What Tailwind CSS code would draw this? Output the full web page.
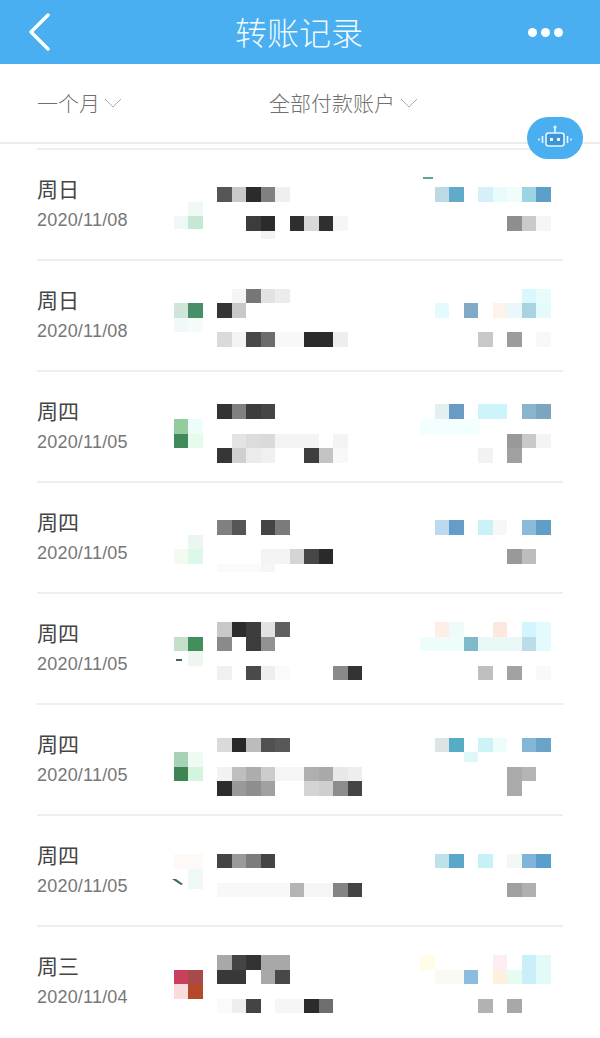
<!DOCTYPE html>
<html lang="zh-CN">
<head>
    <meta charset="UTF-8">
    <meta name="viewport" content="width=device-width, initial-scale=1.0">
    <title>转账记录</title>
    <script src="https://cdn.jsdelivr.net/npm/@tailwindcss/browser@4"></script>
</head>
<body class="bg-white font-['Noto_Sans_CJK_SC','Noto_Sans',sans-serif] w-[600px] h-[1038px] overflow-hidden relative">

    <!-- header -->
    <header class="h-16 bg-[#4aaff0] flex items-center justify-between pl-[27px] pr-[37px] text-white">
        <svg class="w-[25px] h-[38px]" viewBox="0 0 25 38" fill="none" stroke="#fff" stroke-width="3.4" stroke-linecap="round" stroke-linejoin="round"><path d="M21 2 L4 19 L21 36"/></svg>
        <h1 class="text-[32px] font-light leading-none -mt-[3px] pl-[18px] text-white/95">转账记录</h1>
        <div class="flex gap-[4px]">
            <span class="w-[9px] h-[9px] rounded-full bg-white"></span>
            <span class="w-[9px] h-[9px] rounded-full bg-white"></span>
            <span class="w-[9px] h-[9px] rounded-full bg-white"></span>
        </div>
    </header>

    <!-- filters -->
    <div class="h-[80px] border-b-2 border-[#ececec] flex items-center pl-[37px] text-[21px] text-[#707070] font-light">
        <span class="w-[232px] flex items-center">一个月
            <svg class="w-[18px] h-[10px] ml-[4px]" viewBox="0 0 18 10" fill="none" stroke="#aaa" stroke-width="1"><path d="M1 1 L9 9 L17 1"/></svg>
        </span>
        <span class="flex items-center">全部付款账户
            <svg class="w-[18px] h-[10px] ml-[5px]" viewBox="0 0 18 10" fill="none" stroke="#aaa" stroke-width="1"><path d="M1 1 L9 9 L17 1"/></svg>
        </span>
    </div>

    <!-- assistant button -->
    <div class="absolute left-[527px] top-[117px] w-[56px] h-[42px] rounded-[21px] bg-[#4aaff0] flex items-center justify-center">
        <svg class="w-[38px] h-[28px]" viewBox="0 0 38 28" fill="none" stroke="#e8f6fe" stroke-width="1.6">
            <rect x="10" y="9" width="18" height="13" rx="2.5" fill="#3c96d8"/>
            <path d="M19 9 V4"/>
            <circle cx="19" cy="3" r="1.6" fill="#e8f6fe" stroke="none"/>
            <rect x="14" y="14" width="3" height="3" fill="#e8f6fe" stroke="none"/>
            <rect x="21" y="14" width="3" height="3" fill="#e8f6fe" stroke="none"/>
            <path d="M6.500 12 V19 M3 14.500 V16.500 M31.500 12 V19 M35 14.500 V16.500"/>
        </svg>
    </div>

    <main class="pt-[4px]">
        <!-- row 1 -->
        <div class="mx-[37px] h-[111px] border-t-2 border-[#eee] flex">
            <div class="w-[123px] shrink-0 pt-[23px]">
                <p class="text-[21px] leading-[30px] text-[#444]">周日</p>
                <p class="text-[18px] leading-[30px] mt-[2px] tracking-[0.2px] text-[#777] font-['Liberation_Sans']">2020/11/08</p>
            </div>
            <svg class="blur-[0.6px] shrink-0" width="400" height="109" viewBox="160 151 400 109">
                <rect x="188" y="203" width="15" height="14" fill="#f0f8f3"/><rect x="174" y="217" width="14" height="13" fill="#eef9f5"/><rect x="188" y="217" width="15" height="13" fill="#c5e8d5"/>
                <rect x="217" y="188" width="15" height="15" fill="#555"/><rect x="232" y="188" width="14" height="15" fill="#c8c8c8"/><rect x="246" y="188" width="15" height="15" fill="#2b2b2b"/><rect x="261" y="188" width="14" height="15" fill="#808080"/><rect x="275" y="188" width="15" height="15" fill="#efefef"/>
                <rect x="246" y="217" width="15" height="15" fill="#3c3c3c"/><rect x="261" y="217" width="14" height="15" fill="#2b2b2b"/><rect x="290" y="217" width="14" height="15" fill="#2e2e2e"/><rect x="304" y="217" width="15" height="15" fill="#d8d8d8"/><rect x="319" y="217" width="14" height="15" fill="#2f2f2f"/><rect x="333" y="217" width="15" height="15" fill="#f6f6f6"/><rect x="261" y="232" width="14" height="8" fill="#f3f3f3"/>
                <rect x="423" y="178" width="10" height="2" fill="#5aa88c"/>
                <rect x="435" y="188" width="14" height="15" fill="#bcd9e4"/><rect x="449" y="188" width="15" height="15" fill="#5fabc9"/><rect x="478" y="188" width="15" height="15" fill="#d5f0f8"/><rect x="493" y="188" width="14" height="15" fill="#e8fbfb"/><rect x="507" y="188" width="15" height="15" fill="#f0fdf8"/><rect x="522" y="188" width="14" height="15" fill="#9ad5e3"/><rect x="536" y="188" width="15" height="15" fill="#5c9fc9"/>
                <rect x="507" y="217" width="15" height="15" fill="#8e8e8e"/><rect x="522" y="217" width="14" height="15" fill="#cacaca"/><rect x="536" y="217" width="15" height="15" fill="#f6f6f6"/>
            </svg>
        </div>
        <!-- row 2 -->
        <div class="mx-[37px] h-[111px] border-t-2 border-[#eee] flex">
            <div class="w-[123px] shrink-0 pt-[23px]">
                <p class="text-[21px] leading-[30px] text-[#444]">周日</p>
                <p class="text-[18px] leading-[30px] mt-[2px] tracking-[0.2px] text-[#777] font-['Liberation_Sans']">2020/11/08</p>
            </div>
            <svg class="blur-[0.6px] shrink-0" width="400" height="109" viewBox="160 262 400 109">
                <rect x="174" y="304" width="14" height="15" fill="#cfe5d8"/><rect x="188" y="304" width="15" height="15" fill="#468f68"/><rect x="174" y="319" width="14" height="14" fill="#f2f8fa"/><rect x="188" y="319" width="15" height="14" fill="#f5fbf7"/>
                <rect x="232" y="290" width="14" height="14" fill="#f5f5f5"/><rect x="246" y="290" width="15" height="14" fill="#777"/><rect x="261" y="290" width="14" height="14" fill="#e2e2e2"/><rect x="275" y="290" width="15" height="14" fill="#ececec"/>
                <rect x="217" y="304" width="15" height="15" fill="#353535"/><rect x="232" y="304" width="14" height="15" fill="#c8c8c8"/>
                <rect x="217" y="333" width="15" height="15" fill="#dadada"/><rect x="232" y="333" width="14" height="15" fill="#f4f4f4"/><rect x="246" y="333" width="15" height="15" fill="#484848"/><rect x="261" y="333" width="14" height="15" fill="#6c6c6c"/><rect x="275" y="333" width="29" height="15" fill="#f8f8f8"/><rect x="304" y="333" width="29" height="15" fill="#2b2b2b"/><rect x="333" y="333" width="15" height="15" fill="#eee"/>
                <rect x="522" y="290" width="14" height="14" fill="#d8f8fd"/><rect x="536" y="290" width="15" height="14" fill="#e8fbfb"/>
                <rect x="435" y="304" width="14" height="15" fill="#e3fbfd"/><rect x="464" y="304" width="14" height="15" fill="#7fa9c4"/><rect x="493" y="304" width="14" height="15" fill="#fdf3e8"/><rect x="507" y="304" width="15" height="15" fill="#eaf8fb"/><rect x="522" y="304" width="14" height="15" fill="#aad3e2"/><rect x="536" y="304" width="15" height="15" fill="#e3fbfb"/>
                <rect x="478" y="333" width="15" height="15" fill="#c8c8c8"/><rect x="507" y="333" width="15" height="15" fill="#9c9c9c"/><rect x="536" y="333" width="15" height="15" fill="#f8f8f8"/>
            </svg>
        </div>
        <!-- row 3 -->
        <div class="mx-[37px] h-[111px] border-t-2 border-[#eee] flex">
            <div class="w-[123px] shrink-0 pt-[23px]">
                <p class="text-[21px] leading-[30px] text-[#444]">周四</p>
                <p class="text-[18px] leading-[30px] mt-[2px] tracking-[0.2px] text-[#777] font-['Liberation_Sans']">2020/11/05</p>
            </div>
            <svg class="blur-[0.6px] shrink-0" width="400" height="109" viewBox="160 373 400 109">
                <rect x="174" y="420" width="14" height="15" fill="#93cd9c"/><rect x="188" y="420" width="15" height="15" fill="#edfdfb"/><rect x="174" y="435" width="14" height="14" fill="#3f8a58"/><rect x="188" y="435" width="15" height="14" fill="#e5fbec"/>
                <rect x="217" y="405" width="15" height="15" fill="#333"/><rect x="232" y="405" width="14" height="15" fill="#808080"/><rect x="246" y="405" width="15" height="15" fill="#3d3d3d"/><rect x="261" y="405" width="14" height="15" fill="#454545"/>
                <rect x="232" y="435" width="14" height="14" fill="#e4e4e4"/><rect x="246" y="435" width="15" height="14" fill="#dcdcdc"/><rect x="261" y="435" width="14" height="14" fill="#dadada"/><rect x="275" y="435" width="44" height="14" fill="#f4f4f4"/><rect x="333" y="435" width="15" height="14" fill="#f4f4f4"/>
                <rect x="217" y="449" width="15" height="15" fill="#363636"/><rect x="232" y="449" width="14" height="15" fill="#d0d0d0"/><rect x="246" y="449" width="15" height="15" fill="#ebebeb"/><rect x="261" y="449" width="14" height="15" fill="#f0f0f0"/><rect x="304" y="449" width="15" height="15" fill="#3e3e3e"/><rect x="319" y="449" width="14" height="15" fill="#c4c4c4"/><rect x="333" y="449" width="15" height="15" fill="#f8f8f8"/>
                <rect x="420" y="420" width="60" height="15" fill="#f3fefe"/>
                <rect x="435" y="405" width="14" height="15" fill="#e3eff1"/><rect x="449" y="405" width="15" height="15" fill="#6a9bc6"/><rect x="478" y="405" width="29" height="15" fill="#cdf4fb"/><rect x="522" y="405" width="14" height="15" fill="#8ab3cc"/><rect x="536" y="405" width="15" height="15" fill="#7ca5bf"/>
                <rect x="507" y="435" width="15" height="14" fill="#999"/><rect x="522" y="435" width="14" height="14" fill="#c9c9c9"/><rect x="536" y="435" width="15" height="14" fill="#f4f4f4"/><rect x="478" y="449" width="15" height="15" fill="#f2f2f2"/><rect x="507" y="449" width="15" height="15" fill="#a0a0a0"/>
            </svg>
        </div>
        <!-- row 4 -->
        <div class="mx-[37px] h-[111px] border-t-2 border-[#eee] flex">
            <div class="w-[123px] shrink-0 pt-[23px]">
                <p class="text-[21px] leading-[30px] text-[#444]">周四</p>
                <p class="text-[18px] leading-[30px] mt-[2px] tracking-[0.2px] text-[#777] font-['Liberation_Sans']">2020/11/05</p>
            </div>
            <svg class="blur-[0.6px] shrink-0" width="400" height="109" viewBox="160 484 400 109">
                <rect x="188" y="536" width="15" height="14" fill="#ebf6f1"/><rect x="174" y="550" width="14" height="15" fill="#f3faf2"/><rect x="188" y="550" width="15" height="15" fill="#dcf8e8"/>
                <rect x="217" y="521" width="15" height="15" fill="#808080"/><rect x="232" y="521" width="14" height="15" fill="#555"/><rect x="261" y="521" width="14" height="15" fill="#444"/><rect x="275" y="521" width="15" height="15" fill="#7b7b7b"/>
                <rect x="261" y="550" width="29" height="15" fill="#f4f4f4"/><rect x="290" y="550" width="14" height="15" fill="#d5d5d5"/><rect x="304" y="550" width="15" height="15" fill="#474747"/><rect x="319" y="550" width="14" height="15" fill="#2a2a2a"/><rect x="217" y="565" width="44" height="8" fill="#fafafa"/><rect x="261" y="565" width="14" height="8" fill="#f6f6f6"/>
                <rect x="435" y="521" width="14" height="15" fill="#bcd9ee"/><rect x="449" y="521" width="15" height="15" fill="#659dc8"/><rect x="478" y="521" width="15" height="15" fill="#c8f2f8"/><rect x="493" y="521" width="14" height="15" fill="#f7f7f7"/><rect x="522" y="521" width="14" height="15" fill="#8bbbd8"/><rect x="536" y="521" width="15" height="15" fill="#5f9fc5"/>
                <rect x="507" y="550" width="15" height="15" fill="#999"/><rect x="522" y="550" width="14" height="15" fill="#bdbdbd"/>
            </svg>
        </div>
        <!-- row 5 -->
        <div class="mx-[37px] h-[111px] border-t-2 border-[#eee] flex">
            <div class="w-[123px] shrink-0 pt-[23px]">
                <p class="text-[21px] leading-[30px] text-[#444]">周四</p>
                <p class="text-[18px] leading-[30px] mt-[2px] tracking-[0.2px] text-[#777] font-['Liberation_Sans']">2020/11/05</p>
            </div>
            <svg class="blur-[0.6px] shrink-0" width="400" height="109" viewBox="160 595 400 109">
                <rect x="174" y="638" width="14" height="14" fill="#c4e0cc"/><rect x="188" y="638" width="15" height="14" fill="#418f5a"/><rect x="188" y="652" width="15" height="15" fill="#eff6ef"/><rect x="176" y="660" width="6" height="2" fill="#3a6a50"/>
                <rect x="217" y="623" width="15" height="15" fill="#c8c8c8"/><rect x="232" y="623" width="14" height="15" fill="#2c2c2c"/><rect x="246" y="623" width="15" height="15" fill="#3d3d3d"/><rect x="261" y="623" width="14" height="15" fill="#e2e2e2"/><rect x="275" y="623" width="15" height="15" fill="#606060"/>
                <rect x="217" y="638" width="15" height="14" fill="#8a8a8a"/><rect x="246" y="638" width="15" height="14" fill="#3c3c3c"/><rect x="261" y="638" width="14" height="14" fill="#929292"/>
                <rect x="217" y="667" width="15" height="14" fill="#f0f0f0"/><rect x="246" y="667" width="15" height="14" fill="#4a4a4a"/><rect x="261" y="667" width="14" height="14" fill="#eee"/><rect x="275" y="667" width="15" height="14" fill="#fafafa"/><rect x="333" y="667" width="15" height="14" fill="#8a8a8a"/><rect x="348" y="667" width="14" height="14" fill="#333"/>
                <rect x="435" y="623" width="14" height="15" fill="#fdeee8"/><rect x="449" y="623" width="15" height="15" fill="#effbfb"/><rect x="493" y="623" width="14" height="15" fill="#fde8df"/><rect x="522" y="623" width="14" height="15" fill="#d3f5fd"/><rect x="536" y="623" width="15" height="15" fill="#e3fbfd"/>
                <rect x="420" y="638" width="44" height="14" fill="#eefcfc"/><rect x="464" y="638" width="14" height="14" fill="#80b9c9"/><rect x="478" y="638" width="44" height="14" fill="#eaf8f8"/><rect x="522" y="638" width="14" height="14" fill="#bcdcea"/><rect x="536" y="638" width="15" height="14" fill="#e3fbfd"/>
                <rect x="478" y="667" width="15" height="14" fill="#bfbfbf"/><rect x="507" y="667" width="15" height="14" fill="#a2a2a2"/><rect x="536" y="667" width="15" height="14" fill="#f9f9f9"/>
            </svg>
        </div>
        <!-- row 6 -->
        <div class="mx-[37px] h-[111px] border-t-2 border-[#eee] flex">
            <div class="w-[123px] shrink-0 pt-[23px]">
                <p class="text-[21px] leading-[30px] text-[#444]">周四</p>
                <p class="text-[18px] leading-[30px] mt-[2px] tracking-[0.2px] text-[#777] font-['Liberation_Sans']">2020/11/05</p>
            </div>
            <svg class="blur-[0.6px] shrink-0" width="400" height="109" viewBox="160 706 400 109">
                <rect x="174" y="753" width="14" height="15" fill="#a6d2b8"/><rect x="188" y="753" width="15" height="15" fill="#eefaf2"/><rect x="174" y="768" width="14" height="14" fill="#3f8552"/><rect x="188" y="768" width="15" height="14" fill="#d3f5dd"/>
                <rect x="217" y="739" width="15" height="14" fill="#dadada"/><rect x="232" y="739" width="14" height="14" fill="#282828"/><rect x="246" y="739" width="15" height="14" fill="#bcbcbc"/><rect x="261" y="739" width="14" height="14" fill="#505050"/><rect x="275" y="739" width="15" height="14" fill="#585858"/>
                <rect x="217" y="768" width="15" height="14" fill="#f2f2f2"/><rect x="232" y="768" width="14" height="14" fill="#bebebe"/><rect x="246" y="768" width="15" height="14" fill="#adadad"/><rect x="261" y="768" width="14" height="14" fill="#ccc"/><rect x="275" y="768" width="29" height="14" fill="#f5f5f5"/><rect x="304" y="768" width="15" height="14" fill="#afafaf"/><rect x="319" y="768" width="14" height="14" fill="#a9a9a9"/><rect x="333" y="768" width="15" height="14" fill="#e8e8e8"/><rect x="348" y="768" width="14" height="14" fill="#eee"/>
                <rect x="217" y="782" width="15" height="15" fill="#2c2c2c"/><rect x="232" y="782" width="14" height="15" fill="#999"/><rect x="246" y="782" width="15" height="15" fill="#8e8e8e"/><rect x="261" y="782" width="14" height="15" fill="#a0a0a0"/><rect x="304" y="782" width="15" height="15" fill="#d4d4d4"/><rect x="319" y="782" width="14" height="15" fill="#cfcfcf"/><rect x="333" y="782" width="15" height="15" fill="#8c8c8c"/><rect x="348" y="782" width="14" height="15" fill="#444"/>
                <rect x="435" y="739" width="14" height="14" fill="#dee3e3"/><rect x="449" y="739" width="15" height="14" fill="#57acc5"/><rect x="478" y="739" width="15" height="14" fill="#cdf3f7"/><rect x="493" y="739" width="14" height="14" fill="#eefcfc"/><rect x="522" y="739" width="14" height="14" fill="#83b5d8"/><rect x="536" y="739" width="15" height="14" fill="#6ba2c9"/><rect x="464" y="753" width="14" height="10" fill="#dff7fb"/>
                <rect x="507" y="768" width="15" height="29" fill="#aaa"/><rect x="522" y="768" width="14" height="14" fill="#b4b4b4"/>
            </svg>
        </div>
        <!-- row 7 -->
        <div class="mx-[37px] h-[111px] border-t-2 border-[#eee] flex">
            <div class="w-[123px] shrink-0 pt-[23px]">
                <p class="text-[21px] leading-[30px] text-[#444]">周四</p>
                <p class="text-[18px] leading-[30px] mt-[2px] tracking-[0.2px] text-[#777] font-['Liberation_Sans']">2020/11/05</p>
            </div>
            <svg class="blur-[0.6px] shrink-0" width="400" height="109" viewBox="160 817 400 109">
                <rect x="174" y="855" width="29" height="15" fill="#fdf9f6"/><rect x="188" y="870" width="15" height="20" fill="#eef8f4"/><path d="M172 880 L176 880 L183 885 L181 886 Z" fill="#3a6a5a"/>
                <rect x="217" y="855" width="15" height="14" fill="#444"/><rect x="232" y="855" width="14" height="14" fill="#9a9a9a"/><rect x="246" y="855" width="15" height="14" fill="#7c7c7c"/><rect x="261" y="855" width="14" height="14" fill="#444"/>
                <rect x="217" y="884" width="73" height="14" fill="#f8f8f8"/><rect x="290" y="884" width="14" height="14" fill="#b4b4b4"/><rect x="304" y="884" width="29" height="14" fill="#f5f5f5"/><rect x="333" y="884" width="15" height="14" fill="#848484"/><rect x="348" y="884" width="14" height="14" fill="#444"/>
                <rect x="435" y="855" width="14" height="14" fill="#bee2ea"/><rect x="449" y="855" width="15" height="14" fill="#5aa7cb"/><rect x="478" y="855" width="15" height="14" fill="#c6f1f6"/><rect x="507" y="855" width="15" height="14" fill="#f2f8f4"/><rect x="522" y="855" width="14" height="14" fill="#7fb5d8"/><rect x="536" y="855" width="15" height="14" fill="#5a9fcb"/>
                <rect x="507" y="884" width="15" height="14" fill="#a0a0a0"/><rect x="522" y="884" width="14" height="14" fill="#b0b0b0"/>
            </svg>
        </div>
        <!-- row 8 -->
        <div class="mx-[37px] h-[112px] border-t-2 border-[#eee] flex">
            <div class="w-[123px] shrink-0 pt-[23px]">
                <p class="text-[21px] leading-[30px] text-[#444]">周三</p>
                <p class="text-[18px] leading-[30px] mt-[2px] tracking-[0.2px] text-[#777] font-['Liberation_Sans']">2020/11/04</p>
            </div>
            <svg class="blur-[0.6px] shrink-0" width="400" height="110" viewBox="160 928 400 110">
                <rect x="174" y="971" width="14" height="14" fill="#c8405c"/><rect x="188" y="971" width="15" height="14" fill="#a84a4a"/><rect x="174" y="985" width="14" height="15" fill="#fbdcdc"/><rect x="188" y="985" width="15" height="15" fill="#b44a2a"/>
                <rect x="217" y="956" width="15" height="15" fill="#a8a8a8"/><rect x="232" y="956" width="14" height="15" fill="#444"/><rect x="246" y="956" width="15" height="15" fill="#333"/><rect x="261" y="956" width="29" height="15" fill="#a8a8a8"/>
                <rect x="217" y="971" width="29" height="14" fill="#383838"/><rect x="261" y="971" width="14" height="14" fill="#a8a8a8"/><rect x="275" y="971" width="15" height="14" fill="#484848"/>
                <rect x="217" y="1000" width="15" height="14" fill="#fafafa"/><rect x="232" y="1000" width="14" height="14" fill="#eee"/><rect x="246" y="1000" width="15" height="14" fill="#444"/><rect x="275" y="1000" width="29" height="14" fill="#f6f6f6"/><rect x="304" y="1000" width="15" height="14" fill="#2b2b2b"/><rect x="319" y="1000" width="14" height="14" fill="#6e6e6e"/>
                <rect x="420" y="956" width="15" height="15" fill="#fffde8"/><rect x="493" y="956" width="14" height="15" fill="#fdeef3"/><rect x="522" y="956" width="14" height="29" fill="#cbeefb"/><rect x="536" y="956" width="15" height="29" fill="#e3fbf8"/>
                <rect x="435" y="971" width="29" height="14" fill="#fafaf3"/><rect x="464" y="971" width="14" height="14" fill="#8cbce0"/><rect x="493" y="971" width="14" height="14" fill="#fdf0dd"/><rect x="507" y="971" width="15" height="14" fill="#e8fbf3"/>
                <rect x="478" y="1000" width="15" height="14" fill="#b2b2b2"/><rect x="507" y="1000" width="15" height="14" fill="#a8a8a8"/>
            </svg>
        </div>
    </main>
</body>
</html>
